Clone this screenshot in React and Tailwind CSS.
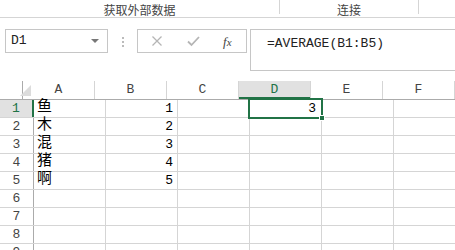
import React from "react";

const cols = ["A", "B", "C", "D", "E", "F"];

const rows = [
  { n: 1, a: "鱼", b: "1" },
  { n: 2, a: "木", b: "2" },
  { n: 3, a: "混", b: "3" },
  { n: 4, a: "猪", b: "4" },
  { n: 5, a: "啊", b: "5" },
  { n: 6 },
  { n: 7 },
  { n: 8 },
  { n: 9 },
];

const mono = { fontFamily: '"Liberation Mono", "Noto Sans CJK SC", monospace' };

const App = () => {
  return (
    <div
      className="w-[455px] h-[250px] overflow-hidden bg-white relative"
      style={mono}
    >
      {/* ribbon group labels */}
      <div
        className="h-[18px] border-b border-[#d5d5d5] flex items-start text-[12px] text-[#444]"
        style={{ fontFamily: '"Noto Sans CJK SC", sans-serif' }}
      >
        <div className="w-[279px] h-[17px] flex items-center justify-center leading-none pt-[2px]">
          获取外部数据
        </div>
        <div className="w-px h-[14px] bg-[#d5d5d5]" />
        <div className="w-[138px] h-[17px] flex items-center justify-center leading-none pt-[2px]">
          连接
        </div>
        <div className="w-px h-[14px] bg-[#d5d5d5]" />
      </div>

      {/* formula bar */}
      <div className="mt-[11px] h-[42px] flex items-start">
        <div className="ml-[5px] w-[103px] h-[24px] border border-[#c6c6c6] flex items-center pl-[5px] pr-[8px] text-[13px] text-[#222]">
          <span className="flex-1">D1</span>
          <span className="w-0 h-0 border-l-[4px] border-r-[4px] border-t-[4px] border-l-transparent border-r-transparent border-t-[#777]" />
        </div>
        <div className="ml-[14px] mt-[8px] flex flex-col gap-[2px]">
          <span className="w-[2px] h-[2px] bg-[#bbb]" />
          <span className="w-[2px] h-[2px] bg-[#bbb]" />
          <span className="w-[2px] h-[2px] bg-[#bbb]" />
        </div>
        <div className="ml-[13px] w-[110px] h-[24px] border border-[#c6c6c6] flex items-center">
          <svg width="12" height="12" viewBox="0 0 12 12" className="ml-[13px]">
            <path d="M1.5 1.5 L10.5 10.5 M10.5 1.5 L1.5 10.5" stroke="#b5b5b5" strokeWidth="1.3" />
          </svg>
          <svg width="13" height="12" viewBox="0 0 13 12" className="ml-[24px]">
            <path d="M1 6.5 L4.5 10 L12 2" stroke="#b5b5b5" strokeWidth="1.8" fill="none" />
          </svg>
          <span
            className="ml-[23px] text-[13px] italic text-[#444] leading-none"
            style={{ fontFamily: '"Liberation Serif", serif' }}
          >
            f<span className="text-[11px]">x</span>
          </span>
        </div>
        <div className="ml-[3px] flex-1 h-[42px] border border-r-0 border-[#c6c6c6] pl-[16px] pt-[4px] text-[13px] text-[#222]">
          =AVERAGE(B1:B5)
        </div>
      </div>

      {/* sheet grid */}
      <div className="mt-[10px] relative">
        <div className="flex h-[19px] border-b border-[#ababab] text-[13px] text-[#444]">
          <div className="w-[34px] border-r border-[#ababab] relative">
            <svg width="11" height="11" viewBox="0 0 11 11" className="absolute left-[20px] top-[4px]">
              <path d="M11 0 L11 11 L0 11 Z" fill="#dcdcdc" />
            </svg>
          </div>
          {cols.map((c) => (
            <div
              key={c}
              className={
                c === "D"
                  ? "w-[72px] shrink-0 bg-[#e1e1e1] text-[#217346] border-r border-[#d5d5d5] flex justify-center items-center shadow-[inset_0_-2px_0_#217346]"
                  : "w-[72px] shrink-0 border-r border-[#d5d5d5] flex justify-center items-center"
              }
            >
              {c}
            </div>
          ))}
        </div>
        {rows.map((r) => (
          <div key={r.n} className="flex h-[18px] border-b border-[#d5d5d5] text-[13px]">
            <div
              className={
                r.n === 1
                  ? "w-[34px] shrink-0 bg-[#e1e1e1] text-[#217346] border-r-2 border-[#217346] flex justify-center items-center"
                  : "w-[34px] shrink-0 text-[#444] border-r border-[#ababab] flex justify-center items-center"
              }
            >
              {r.n}
            </div>
            <div className="w-[72px] shrink-0 border-r border-[#d5d5d5] pl-[3px] flex items-center text-[#000] text-[15px]">
              {r.a}
            </div>
            <div className="w-[72px] shrink-0 border-r border-[#d5d5d5] pr-[4px] flex items-center justify-end text-[#000]">
              {r.b}
            </div>
            <div className="w-[72px] shrink-0 border-r border-[#d5d5d5]" />
            <div className="w-[72px] shrink-0 border-r border-[#d5d5d5] pr-[5px] flex items-center justify-end text-[#000]">
              {r.n === 1 ? "3" : ""}
            </div>
            <div className="w-[72px] shrink-0 border-r border-[#d5d5d5]" />
            <div className="w-[72px] shrink-0 border-r border-[#d5d5d5]" />
          </div>
        ))}

        {/* active cell D1 */}
        <div className="absolute left-[248px] top-[17px] w-[75px] h-[21px] border-2 border-[#217346]" />
        <div className="absolute left-[319px] top-[34px] w-[6px] h-[6px] bg-[#217346] border border-white" />
      </div>
    </div>
  );
};

export default App;
